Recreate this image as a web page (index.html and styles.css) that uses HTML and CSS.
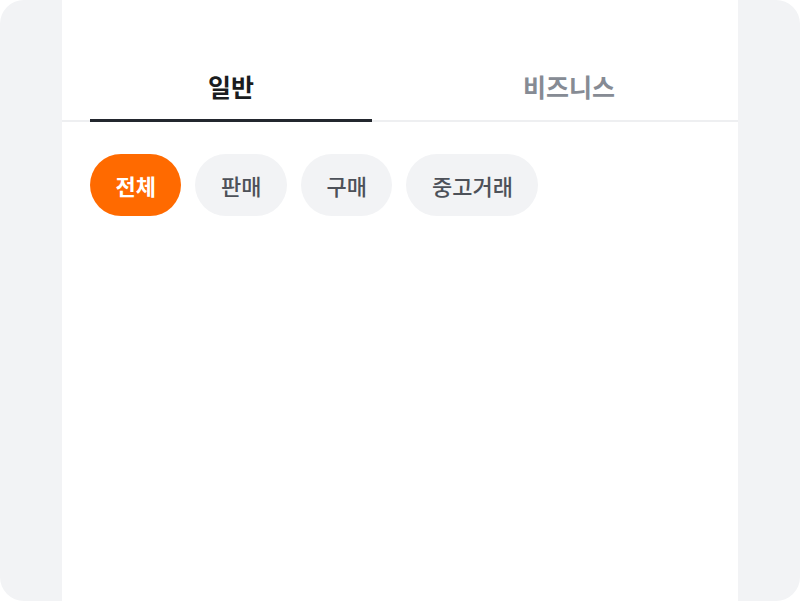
FILE: index.html
```html
<!DOCTYPE html>
<html lang="ko">
<head>
<meta charset="utf-8">
<link rel="stylesheet" href="styles.css">
</head>
<body>
<div class="frame">
  <main class="column">
    <nav class="tabs">
      <div class="tab active">일반</div>
      <div class="tab">비즈니스</div>
    </nav>
    <div class="chips">
      <button class="chip on">전체</button>
      <button class="chip">판매</button>
      <button class="chip">구매</button>
      <button class="chip">중고거래</button>
    </div>
  </main>
</div>
</body>
</html>
```
FILE: styles.css
```css
* { box-sizing: border-box; }
html, body { margin: 0; padding: 0; background: #ffffff; }
body {
  font-family: "Noto Sans CJK KR", "Noto Sans", sans-serif;
}
.frame {
  height: 601px;
  background: #f2f3f5;
  border-radius: 24px;
  display: flex;
  justify-content: center;
  overflow: hidden;
}
.column {
  width: 676px;
  background: #ffffff;
  padding-top: 55px;
}
.tabs {
  display: flex;
  gap: 56px;
  padding: 0 28px;
  border-bottom: 2px solid #eeeff1;
}
.tab {
  flex: 1;
  height: 67px;
  padding-bottom: 3px;
  display: flex;
  align-items: center;
  justify-content: center;
  font-size: 25px;
  font-weight: 700;
  color: #868b94;
  margin-bottom: -2px;
  border-bottom: 3px solid transparent;
}
.tab.active {
  color: #1a1c20;
  border-bottom-color: #23272e;
}
.chips {
  display: flex;
  gap: 14px;
  padding: 32px 28px 0;
}
.chip {
  height: 62px;
  padding: 0 25.5px;
  border: none;
  border-radius: 31px;
  background: #f2f3f5;
  color: #4d5159;
  font-family: inherit;
  font-size: 22px;
  font-weight: 500;
}
.chip.on {
  background: #ff6a00;
  color: #ffffff;
  font-weight: 700;
}
```
